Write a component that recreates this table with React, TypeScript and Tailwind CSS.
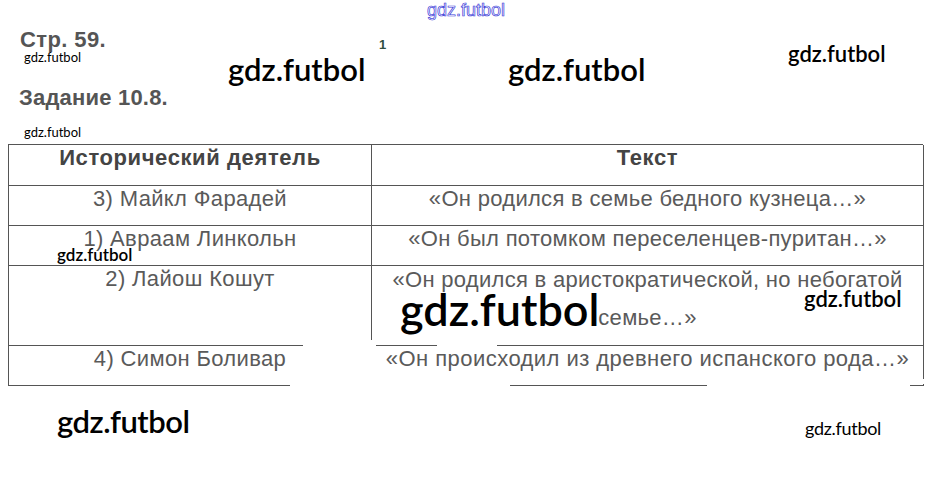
const rows: { name: string; text: React.ReactNode; tall?: boolean }[] = [
  { name: "3) Майкл Фарадей", text: "«Он родился в семье бедного кузнеца…»" },
  { name: "1) Авраам Линкольн", text: "«Он был потомком переселенцев-пуритан…»" },
  {
    name: "2) Лайош Кошут",
    text: (
      <div className="-mt-[5px] leading-[38px]">
        «Он родился в аристократической, но небогатой
        <br />
        семье…»
      </div>
    ),
    tall: true,
  },
  { name: "4) Симон Боливар", text: "«Он происходил из древнего испанского рода…»" },
];

const mark = "absolute text-black font-['Lato',sans-serif] leading-none whitespace-nowrap";

export default function App() {
  return (
    <div className="relative w-[934px] h-[495px] bg-white overflow-hidden font-['Liberation_Sans',Arial,sans-serif]">
      <div className="pt-[27px]">
        <h1 className="pl-[20px] text-[22px] font-bold text-[#555] leading-[25px] tracking-[0.4px]">Стр. 59.</h1>
        <h2 className="pl-[19px] mt-[33px] text-[22px] font-bold text-[#555] leading-[25px] tracking-[0.2px]">
          Задание 10.8.
        </h2>

        <div className="ml-[8px] mt-[34px] w-[915px] grid grid-cols-[363px_552px] border-t border-l border-[#555] text-[22px] leading-[25px] tracking-[0.35px]">
          <div className="h-[41px] border-r border-b border-[#555] text-center font-bold text-[#444] tracking-[0.6px]">
            Исторический деятель
          </div>
          <div className="h-[41px] border-r border-b border-[#555] text-center font-bold text-[#444] tracking-[0.6px]">
            Текст
          </div>
          {rows.map((r, i) => (
            <div key={i} className="contents">
              <div
                className={`${r.tall ? "h-[80px]" : "h-[40px]"} border-r border-b border-[#555] text-center text-[#5a5a5a]`}
              >
                {r.name}
              </div>
              <div
                className={`${r.tall ? "h-[80px]" : "h-[40px]"} border-r border-b border-[#555] text-center text-[#5a5a5a] ${i === 3 ? "tracking-[0.45px]" : "tracking-[0.3px]"}`}
              >
                {r.text}
              </div>
            </div>
          ))}
        </div>
      </div>

      {/* scan gaps in the lines */}
      <div className="absolute left-[303px] top-[340px] w-[73px] h-[10px] bg-white" />
      <div className="absolute left-[369px] top-[340px] w-[6px] h-[50px] bg-white" />
      <div className="absolute left-[437px] top-[340px] w-[60px] h-[10px] bg-white" />
      <div className="absolute left-[290px] top-[382px] w-[220px] h-[10px] bg-white" />
      <div className="absolute left-[707px] top-[382px] w-[203px] h-[10px] bg-white" />
      <div className="absolute left-[918px] top-[379px] w-[10px] h-[5px] bg-white" />

      <span className="absolute left-[379px] top-[35px] text-[13px] font-bold text-[#2f4f3f]">1</span>

      {/* watermarks */}
      <span
        className="absolute left-[427px] top-[1px] text-[18px] font-['Liberation_Sans',sans-serif] text-white leading-none"
        style={{ WebkitTextStroke: "0.7px #3a3ad8" }}
      >
        gdz.futbol
      </span>
      <span className={`${mark} left-[24px] top-[51px] text-[13px]`}>gdz.futbol</span>
      <span className={`${mark} left-[24px] top-[126px] text-[13px]`}>gdz.futbol</span>
      <span className={`${mark} left-[228px] top-[54px] text-[31px] font-semibold`}>gdz.futbol</span>
      <span className={`${mark} left-[508px] top-[54px] text-[31px] font-semibold`}>gdz.futbol</span>
      <span className={`${mark} left-[788px] top-[43px] text-[22px] font-semibold`}>gdz.futbol</span>
      <span className={`${mark} left-[57px] top-[246px] text-[17px] font-semibold`}>gdz.futbol</span>
      <span className={`${mark} left-[400px] top-[287px] text-[45px] font-semibold`}>gdz.futbol</span>
      <span className={`${mark} left-[804px] top-[288px] text-[22px] font-semibold`}>gdz.futbol</span>
      <span className={`${mark} left-[57px] top-[406px] text-[31px] font-semibold tracking-[-0.5px]`}>gdz.futbol</span>
      <span className={`${mark} left-[805px] top-[419px] text-[18px] tracking-[-0.3px]`}>gdz.futbol</span>
    </div>
  );
}
